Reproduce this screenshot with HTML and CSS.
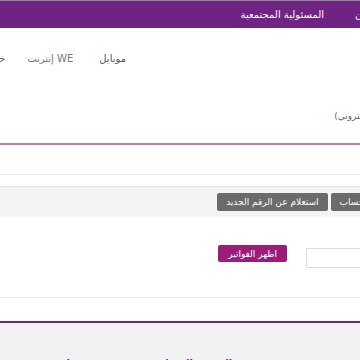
FILE: index.html
```html
<!DOCTYPE html>
<html lang="ar" dir="rtl">
<head>
  <meta charset="UTF-8">
  <meta name="viewport" content="width=device-width, initial-scale=1.0">
  <title>الفواتير</title>
  <link rel="stylesheet" href="styles.css">
</head>
<body>
  <div class="topline"></div>
  <nav class="topbar">
    <a href="#">من نحن</a>
    <a href="#">المسئولية المجتمعية</a>
  </nav>

  <nav class="subnav">
    <a href="#">موبايل</a>
    <a href="#" class="muted">WE إنترنت</a>
    <a href="#" class="last">خدمات</a>
  </nav>

  <p class="hint">(بريد إلكتروني)</p>

  <div class="pinkline"></div>
  <div class="spacer"></div>

  <div class="toolbar">
    <button class="btn-gray">فتح حساب</button>
    <button class="btn-gray">استعلام عن الرقم الجديد</button>
  </div>

  <div class="search">
    <input type="text" class="field">
    <button class="btn-purple">اظهر الفواتير</button>
  </div>

  <div class="divider"></div>

  <table class="bills">
    <thead>
      <tr>
        <th class="col-a">رقم</th>
        <th class="col-b">الحجم والمساحة</th>
        <th class="col-c">حساب</th>
      </tr>
    </thead>
  </table>
</body>
</html>
```

FILE: styles.css
```css
body {
  margin: 0;
  font-family: 'DejaVu Sans', sans-serif;
  background: #fff;
  color: #555;
  overflow: hidden;
  height: 360px;
}
a {
  text-decoration: none;
}
.topline {
  height: 1px;
  background: #8d8d8d;
}
.topbar {
  height: 27px;
  background: #6f2382;
  display: flex;
  align-items: center;
  gap: 31px;
  margin-right: -28px;
}
.topbar a {
  color: #fff;
  font-size: 10px;
  white-space: nowrap;
}
.subnav {
  display: flex;
  gap: 26px;
  padding-right: 234px;
  margin-top: 21px;
  height: 18px;
  align-items: center;
}
.subnav a {
  color: #555;
  font-size: 10px;
  white-space: nowrap;
}
.subnav .muted {
  color: #777;
}
.subnav .last {
  margin-right: -4px;
}
.hint {
  margin: 44px -31px 0 0;
  font-size: 9px;
  color: #666;
  white-space: nowrap;
}
.pinkline {
  margin-top: 22px;
  height: 2px;
  background: #c47bb1;
}
.spacer {
  height: 29px;
  border-bottom: 1px solid #e6e6e6;
}
.toolbar {
  margin-top: 11px;
  height: 30px;
  background: #f4f4f4;
  border-top: 1px solid #e4e4e4;
  display: flex;
  align-items: center;
  gap: 3px;
  margin-right: -29px;
}
.btn-gray {
  font-family: inherit;
  font-size: 9px;
  color: #fff;
  background: #6b6b6b;
  border: none;
  border-radius: 2px;
  height: 18px;
  padding: 0 9px;
  white-space: nowrap;
}
.search {
  display: flex;
  align-items: flex-start;
  gap: 19px;
  height: 80px;
  border-bottom: 1px solid #e6e6e6;
  margin-right: -20px;
}
.field {
  width: 72px;
  height: 18px;
  border: 1px solid #dcdcdc;
  padding: 0;
  margin-top: 31px;
}
.btn-purple {
  font-family: inherit;
  font-size: 9px;
  color: #fff;
  background: #9b1d79;
  border: none;
  border-radius: 2px;
  height: 17px;
  padding: 0 10px;
  margin-top: 28px;
  white-space: nowrap;
}
.divider {
  height: 23px;
}
.bills {
  width: 100%;
  table-layout: fixed;
  border-collapse: collapse;
  border-top: 2px solid #6f2381;
  background: #f2f2f2;
}
.bills th {
  height: 46px;
  vertical-align: bottom;
  color: #7a2a88;
  font-size: 10px;
  font-weight: bold;
  padding: 0;
  white-space: nowrap;
}
.bills .col-a {
  width: 15px;
  text-align: left;
  padding-left: 105px;
}
.col-b { width: 96px; }
.col-c { width: 144px; }
```
